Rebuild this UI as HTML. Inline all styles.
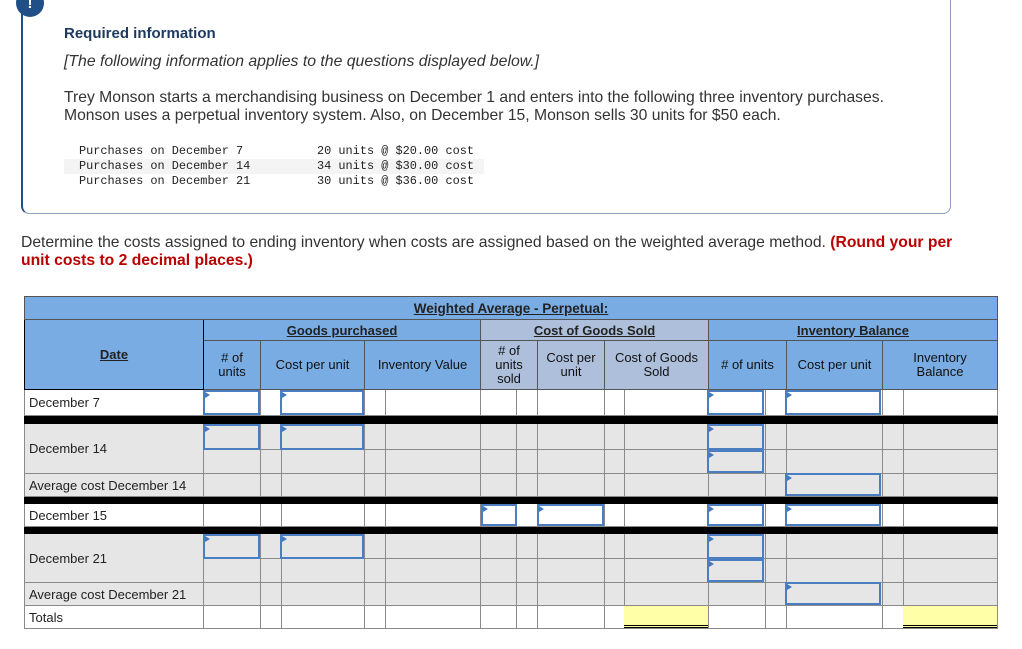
<!DOCTYPE html>
<html><head><meta charset="utf-8">
<style>
*{margin:0;padding:0;box-sizing:border-box}
body{width:1022px;height:649px;background:#fff;font-family:"Liberation Sans",Arial,sans-serif;position:relative;overflow:hidden;color:#222}
.box{position:absolute;left:21px;top:-8px;width:930px;height:222px;border:1px solid #8aa0bd;border-left:2px solid #1f4f86;border-radius:0 0 8px 8px}
.icon{position:absolute;left:16px;top:-11px;width:28px;height:28px;border-radius:50%;background:#1f4f86;color:#fff;font-weight:bold;font-size:15px;text-align:center;line-height:30px}
.t{position:absolute;white-space:nowrap}
.mono{font-family:"Liberation Mono",monospace;font-size:11.9px;color:#222}
table{position:absolute;left:24px;top:296px;border-collapse:collapse;table-layout:fixed;width:973px;font-size:13px}
td{border:1px solid #8a8a8a;padding:0;overflow:hidden}
.h{background:#78ace3;text-align:center;color:#111;border-color:#555}
.hc{background:#aebfdc;text-align:center;color:#111;border-color:#555}
.u{text-decoration:underline;font-weight:bold;color:#222}
.g td{background:#e6e6e6}
.bl td{background:#000;border-color:#000;height:8px}
.dl{padding-left:4px;text-align:left}
.bk{border-left:1px solid #000}
.in{position:absolute;border:2px solid #4a7ec0;}
.in:before{content:"";position:absolute;left:0;top:0;border-left:5px solid #3d7bc0;border-top:3px solid transparent;border-bottom:3px solid transparent}
.y{position:absolute;background:#ffffa8;border-bottom:3px double #000}
</style></head><body>
<div class="box"></div>
<div class="icon">!</div>
<div class="t" style="left:64px;top:25px;font-size:15px;font-weight:bold;color:#1f3a60">Required information</div>
<div class="t" style="left:64px;top:53px;font-size:15.8px;font-style:italic;color:#333">[The following information applies to the questions displayed below.]</div>
<div class="t" style="left:64px;top:89px;font-size:15.7px;line-height:18px;color:#333">Trey Monson starts a merchandising business on December 1 and enters into the following three inventory purchases.<br>Monson uses a perpetual inventory system. Also, on December 15, Monson sells 30 units for $50 each.</div>
<div style="position:absolute;left:64px;top:159px;width:420px;height:15px;background:#f4f4f4"></div>
<div class="t mono" style="left:79px;top:144px;line-height:15px">Purchases on December 7<br>Purchases on December 14<br>Purchases on December 21</div>
<div class="t mono" style="left:317px;top:144px;line-height:15px">20 units @ $20.00 cost<br>34 units @ $30.00 cost<br>30 units @ $36.00 cost</div>
<div class="t" style="left:21px;top:234px;font-size:15.7px;line-height:18px;color:#333">Determine the costs assigned to ending inventory when costs are assigned based on the weighted average method. <b style="color:#b00">(Round your per</b><br><b style="color:#b00">unit costs to 2 decimal places.)</b></div>

<table>
<colgroup><col style="width:179px"><col style="width:57px"><col style="width:21px"><col style="width:83px"><col style="width:21px"><col style="width:95px"><col style="width:36px"><col style="width:21px"><col style="width:67px"><col style="width:20px"><col style="width:84px"><col style="width:57px"><col style="width:21px"><col style="width:96px"><col style="width:21px"><col style="width:94px"></colgroup>
<tr style="height:23px"><td class="h u" colspan="16" style="font-size:13.5px">Weighted Average - Perpetual:</td></tr>
<tr style="height:21px"><td class="h u" rowspan="2" style="border-color:#000">Date</td><td class="h u" colspan="5" style="border-left:1px solid #000">Goods purchased</td><td class="hc u" colspan="5" style="border-left:1px solid #000">Cost of Goods Sold</td><td class="h u" colspan="5" style="border-left:1px solid #000">Inventory Balance</td></tr>
<tr style="height:49px;line-height:14px"><td class="h" style="border-left:1px solid #000"># of<br>units</td><td class="h" colspan="2">Cost per unit</td><td class="h" colspan="2">Inventory Value</td><td class="hc" colspan="2" style="border-left:1px solid #000"># of<br>units<br>sold</td><td class="hc">Cost per<br>unit</td><td class="hc" colspan="2">Cost of Goods<br>Sold</td><td class="h" colspan="2" style="border-left:1px solid #000"># of units</td><td class="h">Cost per unit</td><td class="h" colspan="2">Inventory<br>Balance</td></tr>
<tr style="height:26px"><td class="dl">December 7</td><td class="bk"></td><td></td><td></td><td></td><td></td><td class="bk"></td><td></td><td></td><td></td><td></td><td class="bk"></td><td></td><td></td><td></td><td></td></tr>
<tr class="bl"><td colspan="16"></td></tr>
<tr class="g" style="height:26px"><td class="dl" rowspan="2">December 14</td><td class="bk"></td><td></td><td></td><td></td><td></td><td class="bk"></td><td></td><td></td><td></td><td></td><td class="bk"></td><td></td><td></td><td></td><td></td></tr>
<tr class="g" style="height:24px"><td class="bk"></td><td></td><td></td><td></td><td></td><td class="bk"></td><td></td><td></td><td></td><td></td><td class="bk"></td><td></td><td></td><td></td><td></td></tr>
<tr class="g" style="height:23px"><td class="dl">Average cost December 14</td><td class="bk"></td><td></td><td></td><td></td><td></td><td class="bk"></td><td></td><td></td><td></td><td></td><td class="bk"></td><td></td><td></td><td></td><td></td></tr>
<tr class="bl"><td colspan="16" style="height:7px"></td></tr>
<tr style="height:23px"><td class="dl">December 15</td><td class="bk"></td><td></td><td></td><td></td><td></td><td class="bk"></td><td></td><td></td><td></td><td></td><td class="bk"></td><td></td><td></td><td></td><td></td></tr>
<tr class="bl"><td colspan="16" style="height:7px"></td></tr>
<tr class="g" style="height:25px"><td class="dl" rowspan="2">December 21</td><td class="bk"></td><td></td><td></td><td></td><td></td><td class="bk"></td><td></td><td></td><td></td><td></td><td class="bk"></td><td></td><td></td><td></td><td></td></tr>
<tr class="g" style="height:24px"><td class="bk"></td><td></td><td></td><td></td><td></td><td class="bk"></td><td></td><td></td><td></td><td></td><td class="bk"></td><td></td><td></td><td></td><td></td></tr>
<tr class="g" style="height:23px"><td class="dl">Average cost December 21</td><td class="bk"></td><td></td><td></td><td></td><td></td><td class="bk"></td><td></td><td></td><td></td><td></td><td class="bk"></td><td></td><td></td><td></td><td></td></tr>
<tr style="height:23px"><td class="dl">Totals</td><td class="bk"></td><td></td><td></td><td></td><td></td><td class="bk"></td><td></td><td></td><td></td><td></td><td class="bk"></td><td></td><td></td><td></td><td></td></tr>
</table>

<div class="in" style="left:203px;top:390px;width:57px;height:25px;background:#fff"></div>
<div class="in" style="left:280px;top:390px;width:84px;height:25px;background:#fff"></div>
<div class="in" style="left:707px;top:390px;width:57px;height:25px;background:#fff"></div>
<div class="in" style="left:785px;top:390px;width:96px;height:25px;background:#fff"></div>

<div class="in" style="left:203px;top:424px;width:57px;height:26px"></div>
<div class="in" style="left:280px;top:424px;width:84px;height:26px"></div>
<div class="in" style="left:707px;top:424px;width:57px;height:26px"></div>
<div class="in" style="left:707px;top:450px;width:57px;height:23px"></div>
<div class="in" style="left:785px;top:473px;width:96px;height:23px"></div>

<div class="in" style="left:481px;top:504px;width:36px;height:22px;background:#fff"></div>
<div class="in" style="left:537px;top:504px;width:67px;height:22px;background:#fff"></div>
<div class="in" style="left:707px;top:504px;width:57px;height:22px;background:#fff"></div>
<div class="in" style="left:785px;top:504px;width:96px;height:22px;background:#fff"></div>

<div class="in" style="left:203px;top:534px;width:57px;height:25px"></div>
<div class="in" style="left:280px;top:534px;width:84px;height:25px"></div>
<div class="in" style="left:707px;top:534px;width:57px;height:25px"></div>
<div class="in" style="left:707px;top:559px;width:57px;height:23px"></div>
<div class="in" style="left:785px;top:582px;width:96px;height:23px"></div>

<div class="y" style="left:624px;top:606px;width:84px;height:22px"></div>
<div class="y" style="left:903px;top:606px;width:94px;height:22px"></div>
</body></html>
